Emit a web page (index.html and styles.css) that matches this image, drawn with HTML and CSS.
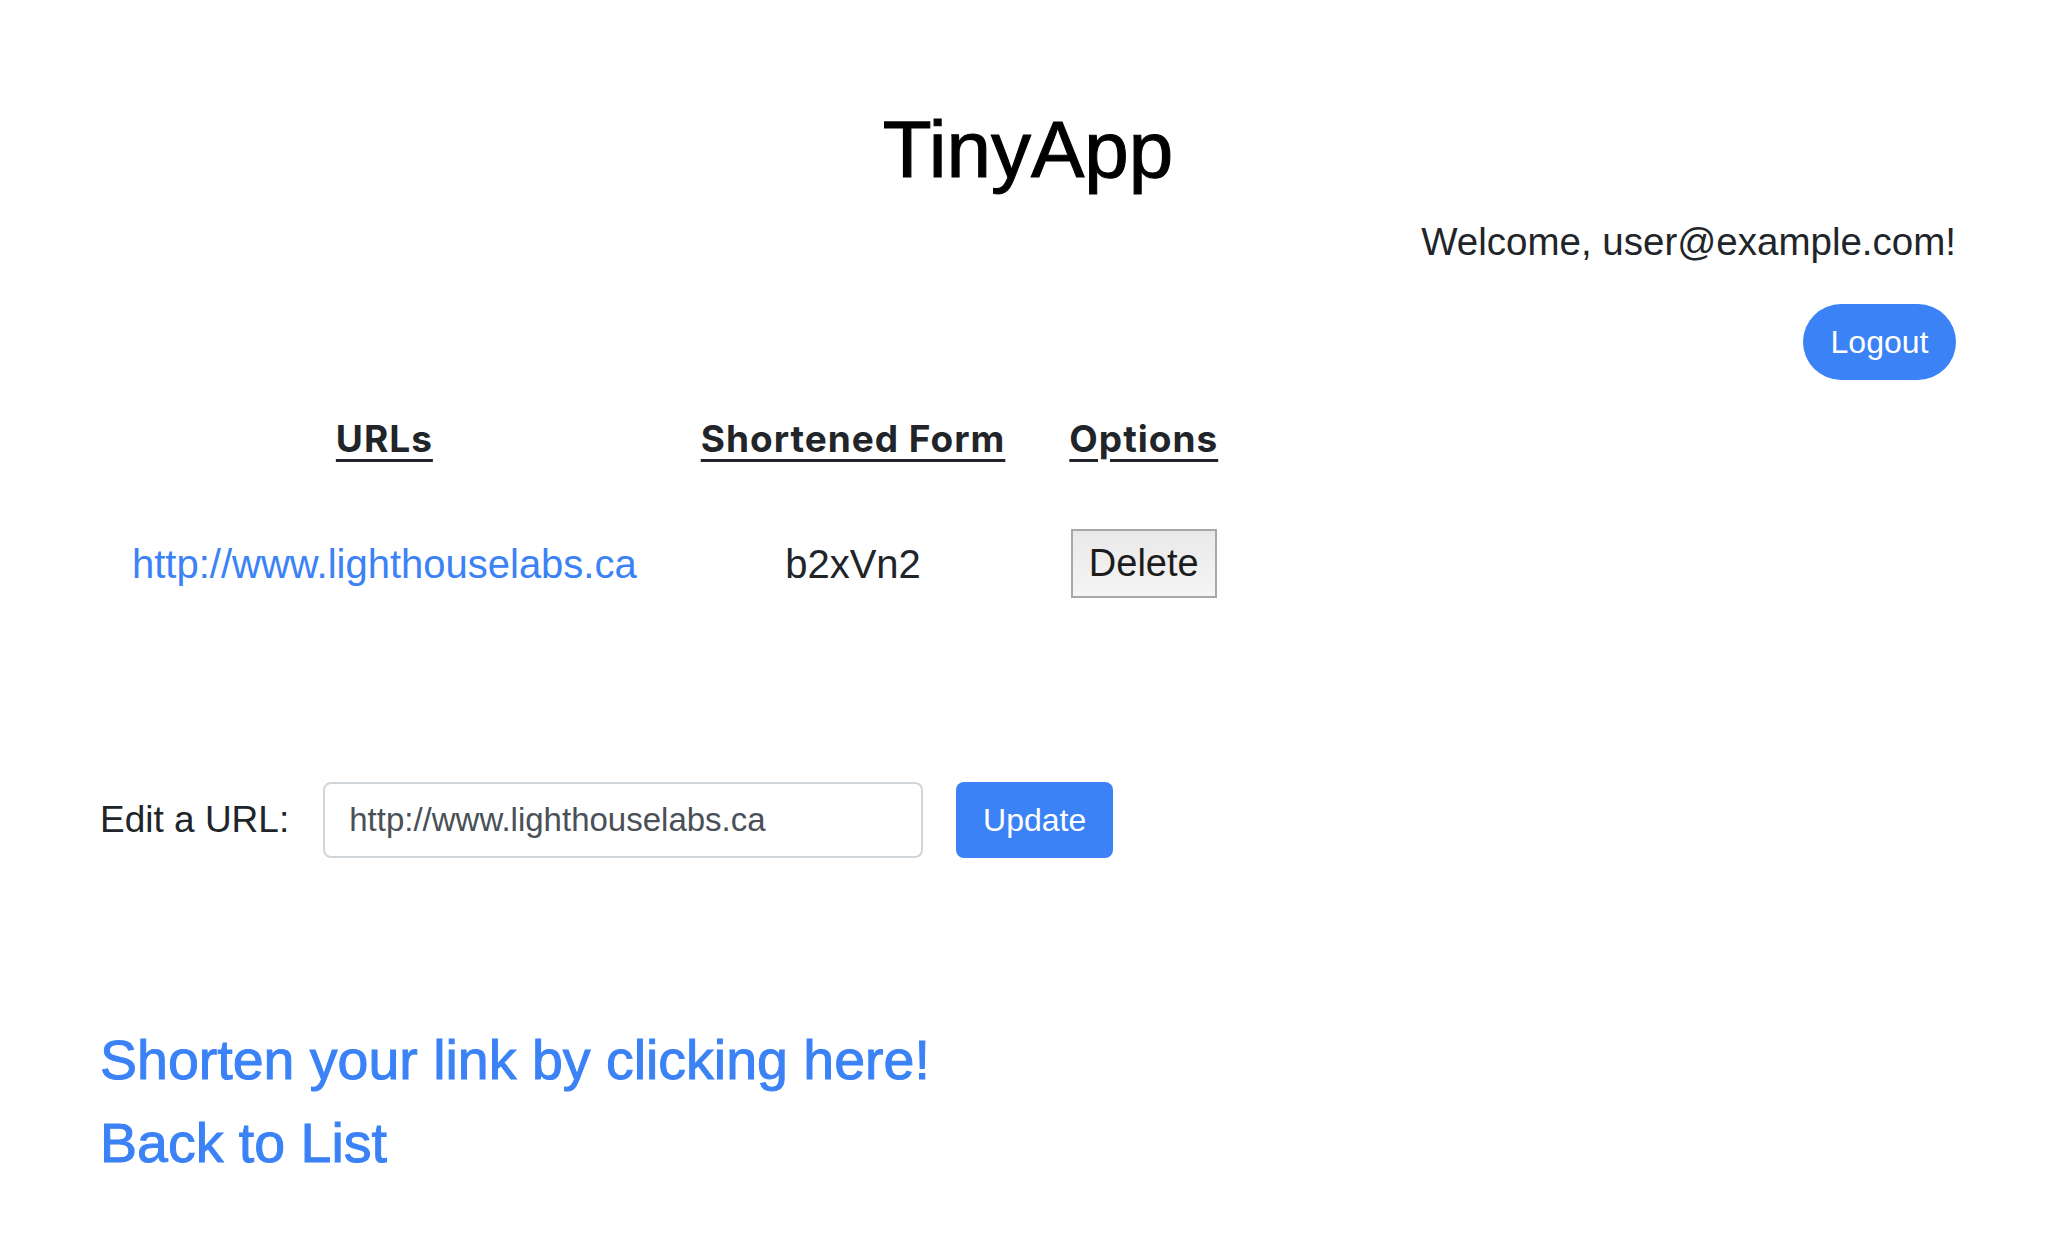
FILE: index.html
```html
<!DOCTYPE html>
<html lang="en">
<head>
<meta charset="utf-8">
<title>TinyApp</title>
<link rel="stylesheet" href="styles.css">
</head>
<body>
<div class="page">
  <header class="top">
    <h1 class="title">TinyApp</h1>
    <div class="user">
      <p class="welcome">Welcome, user@example.com!</p>
      <button class="btn btn-logout" type="button">Logout</button>
    </div>
  </header>
  <main class="content">
    <table class="urls">
      <thead>
        <tr>
          <th>URLs</th>
          <th>Shortened Form</th>
          <th>Options</th>
        </tr>
      </thead>
      <tbody>
        <tr>
          <td><a class="link" href="#">http://www.lighthouselabs.ca</a></td>
          <td>b2xVn2</td>
          <td><button class="btn-delete" type="button">Delete</button></td>
        </tr>
      </tbody>
    </table>
    <form class="edit">
      <label class="edit-label" for="longURL">Edit a URL:</label>
      <input class="edit-input" id="longURL" type="text" value="http://www.lighthouselabs.ca">
      <button class="btn btn-update" type="button">Update</button>
    </form>
    <div class="links">
      <h3 class="big-link"><a href="#">Shorten your link by clicking here!</a></h3>
      <h3 class="big-link"><a href="#">Back to List</a></h3>
    </div>
  </main>
</div>
</body>
</html>
```

FILE: styles.css
```css
html, body {
  margin: 0;
  padding: 0;
  background: #ffffff;
}

body {
  font-family: "Liberation Sans", Arial, sans-serif;
  color: #212529;
}

.page {
  padding: 102px 98px 0 100px;
}

.top {
  display: flex;
  flex-direction: column;
}

.title {
  margin: 0;
  font-size: 80px;
  line-height: 96px;
  font-weight: 400;
  text-align: center;
  color: #000000;
  -webkit-text-stroke: 1.1px #000000;
}

.user {
  margin-top: 15px;
  display: flex;
  flex-direction: column;
  align-items: flex-end;
}

.welcome {
  margin: 0;
  font-size: 38.5px;
  line-height: 58px;
  color: #212529;
}

.btn {
  font-family: "Liberation Sans", Arial, sans-serif;
  font-size: 32px;
  color: #ffffff;
  background: #3b82f6;
  border: none;
  height: 76px;
  box-sizing: border-box;
  cursor: pointer;
}

.btn-logout {
  margin-top: 33px;
  width: 153px;
  border-radius: 38px;
  padding: 0;
}

.content {
  display: flex;
  flex-direction: column;
  align-items: flex-start;
}

.urls {
  margin-top: 16px;
  border-collapse: collapse;
}

.urls th {
  padding: 19px 32px 13px 32px;
  font-family: Inter, "Liberation Sans", sans-serif;
  font-weight: 700;
  font-size: 37px;
  letter-spacing: 1px;
  line-height: 48px;
  text-align: center;
  text-decoration: underline;
  text-decoration-thickness: 3px;
  text-underline-offset: 7px;
  color: #212529;
  white-space: nowrap;
}

.urls td {
  padding: 53px 32px;
  font-size: 40px;
  line-height: 60px;
  text-align: center;
  vertical-align: middle;
  white-space: nowrap;
}

.link {
  color: #3b82f6;
  text-decoration: none;
}

.btn-delete {
  font-family: "Liberation Sans", Arial, sans-serif;
  font-size: 38px;
  color: #1c1c1c;
  height: 69px;
  width: 146px;
  padding: 0;
  box-sizing: border-box;
  border: 2px solid #a8a8a8;
  border-radius: 0;
  background: linear-gradient(#e9e9e9, #f5f5f5);
  vertical-align: middle;
}

.edit {
  margin-top: 131px;
  display: flex;
  align-items: center;
}

.edit-label {
  font-size: 37px;
  line-height: 56px;
  color: #212529;
}

.edit-input {
  margin-left: 34px;
  width: 600px;
  height: 76px;
  box-sizing: border-box;
  padding: 0 24px;
  border: 2px solid #d0d5da;
  border-radius: 8px;
  font-family: "Liberation Sans", Arial, sans-serif;
  font-size: 33px;
  color: #495057;
  background: #ffffff;
}

.btn-update {
  margin-left: 33px;
  width: 157px;
  border-radius: 8px;
  padding: 0;
}

.links {
  margin-top: 169px;
}

.big-link {
  margin: 0 0 16px 0;
  font-size: 55.5px;
  line-height: 67px;
  font-weight: 400;
  -webkit-text-stroke: 1px #3b82f6;
}

.big-link a {
  color: #3b82f6;
  text-decoration: none;
}
```
